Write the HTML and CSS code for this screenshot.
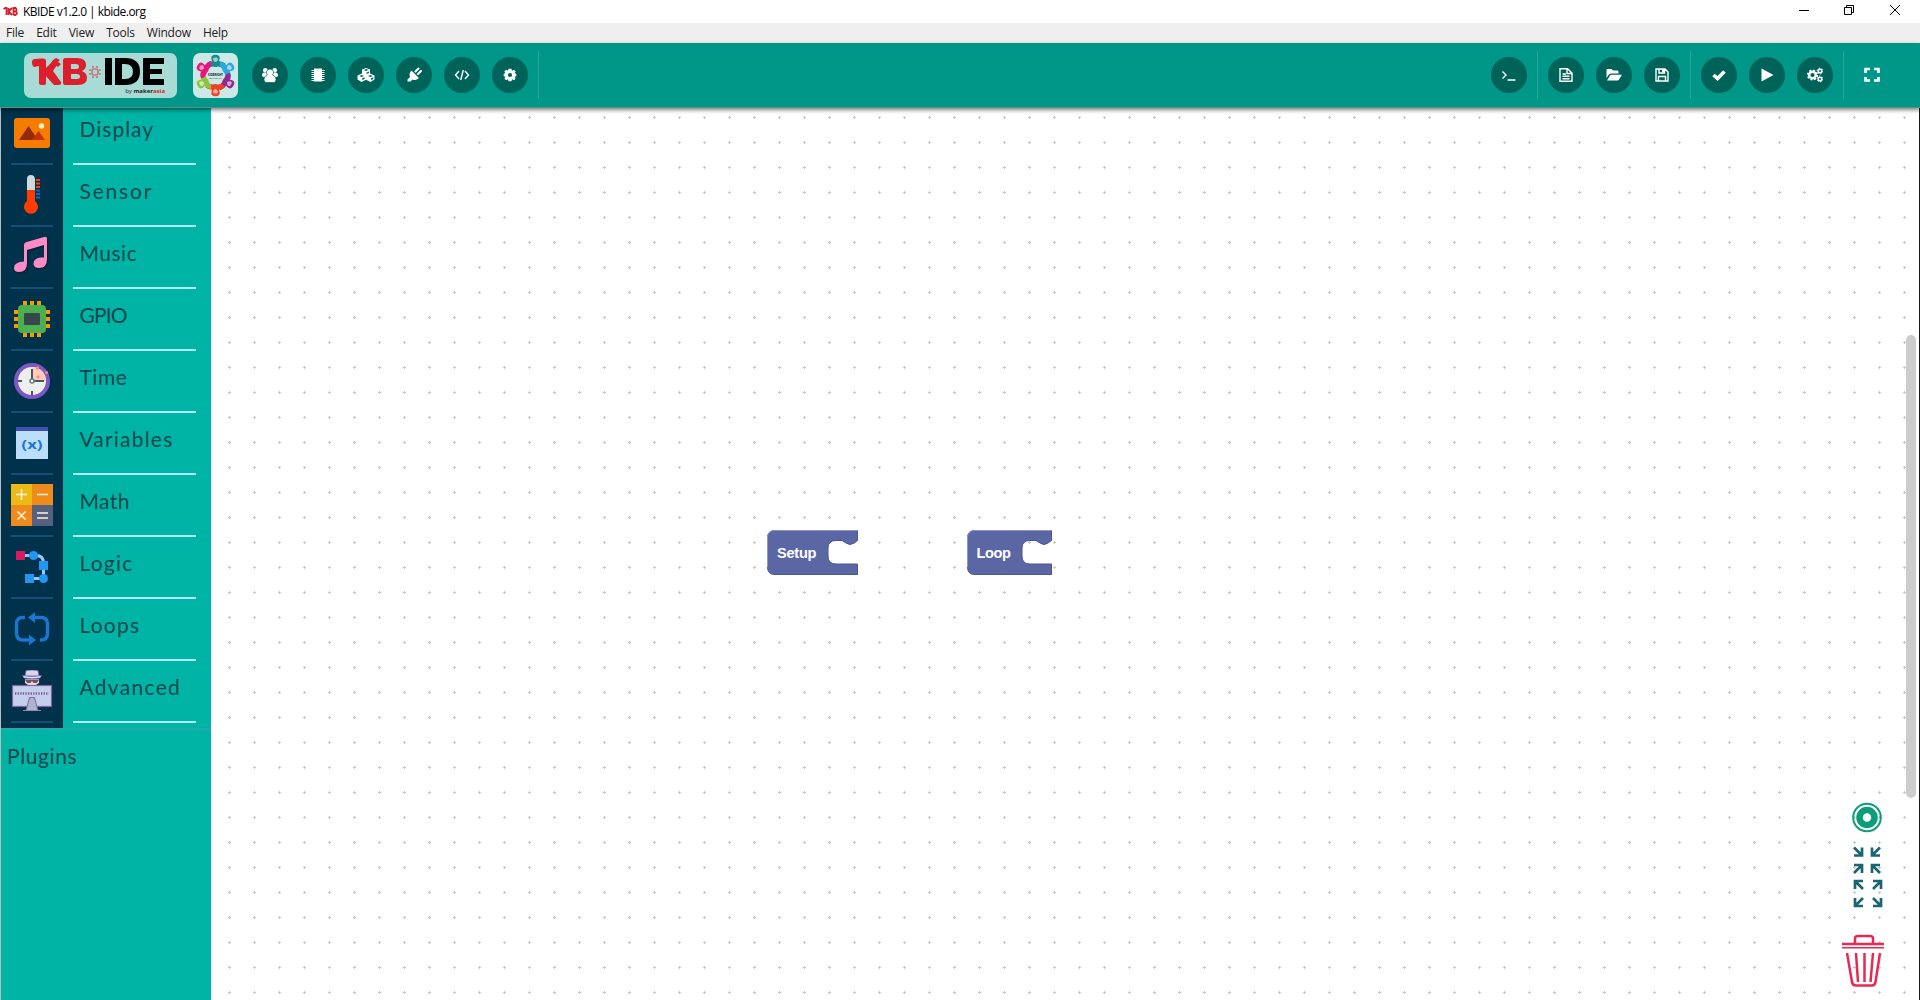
FILE: index.html
```
<!DOCTYPE html>
<html lang="en">
<head>
<meta charset="utf-8">
<title>KBIDE v1.2.0 | kbide.org</title>
<link rel="stylesheet" href="styles.css">
</head>
<body>
<div class="app">
  <header class="titlebar">
    <svg class="title-logo" viewBox="0 0 14 9"><path d="M0 2L2 1H3V8M5 1V8M8.500 1L5 4.500L8.500 8M10 8V1H12Q14 2.500 12 4.500Q15 6 12 8H10M10 4.500H12" fill="none" stroke="#d81e28" stroke-width="1.800"/></svg>
    <span class="title-text">KBIDE v1.2.0 | kbide.org</span>
    <div class="window-controls">
      <svg width="12" height="12" viewBox="0 0 12 12"><path d="M2 6.500H12" /></svg>
      <svg width="12" height="12" viewBox="0 0 12 12"><path d="M1.500 3.500H8.500V10.500H1.500ZM3.500 3.500V1.500H10.500V8.500H8.500" /></svg>
      <svg width="12" height="12" viewBox="0 0 12 12"><path d="M1 1L11 11M11 1L1 11" /></svg>
    </div>
  </header>
  <nav class="menubar"><span>File</span><span>Edit</span><span>View</span><span>Tools</span><span>Window</span><span>Help</span></nav>

  <div class="toolbar">
    <div class="logo">
      <div class="logo-main">
        <svg class="logo-spark" viewBox="0 0 153 45">
          <g fill="#dc1f2a"><path d="M8 9Q8 6 11 6L17 5.500H19Q22 5.500 22 8V30Q22 32 20 32H17Q15 32 15 30V13L10 14Q8 13 8 9Z"/><path d="M20 17L28 9L33 12L29 18L37 29Q38 32 34 32H30L20 21Z"/><path d="M29 7L32 5L36 7L34 9L37 11L34 14L31 12L28 13L27 10Z"/><path fill-rule="evenodd" d="M41 5H53Q62 5 62 12Q62 16 58 18Q63 20 63 25Q63 32 54 32H41Q39 32 39 29V8Q39 5 41 5ZM47 11V16H52Q55 16 55 13.500Q55 11 52 11ZM47 21V26H53Q56 26 56 23.500Q56 21 53 21Z"/></g>
          <g stroke="#dc4a50" fill="none" stroke-width="1.200"><rect x="68" y="16" width="6" height="6" rx="1.500"/><path d="M69 15V13M73 15V13M69 23V25M73 23V25M67 17H65M67 21H65M75 17H77M75 21H77"/></g>
          <path d="M81 5H88V32H81ZM91 5H101Q116 5 116 18.500Q116 32 101 32H91ZM98 11V26H101Q109 26 109 18.500Q109 11 101 11ZM119 5H140V11H126V16H138V21H126V26H140V32H119Z" fill="#000" fill-rule="evenodd"/>
        </svg>
        <span class="logo-by">by <b>maker<i>asia</i></b></span>
      </div>
    </div>
    <div class="community">
      <svg viewBox="0 0 45 45">
        <defs><g id="person"><path d="M18.300 5.500Q18 1.800 22.500 1.800T26.700 5.500L26 8.200Q29.500 8 33 11Q29 15 25 13.500Q22.500 14.500 20 13.500Q16 15 13 11.500Q15.500 8.200 19 8.200Z"/><path d="M20 6.500Q20 4 22.500 4.500Q25 4 25 6.500Q24 9 22.500 9T20 6.500Z" fill="#fff" fill-opacity=".6"/></g></defs>
        <use href="#person" fill="#168c8c"/><use href="#person" fill="#2aa7df" transform="rotate(60 22.500 22.500)"/><use href="#person" fill="#94278f" transform="rotate(120 22.500 22.500)"/><use href="#person" fill="#ef4123" transform="rotate(180 22.500 22.500)"/><use href="#person" fill="#8bc53f" transform="rotate(240 22.500 22.500)"/><use href="#person" fill="#e9127f" transform="rotate(300 22.500 22.500)"/>
        <text x="15" y="22.500" textLength="15" lengthAdjust="spacingAndGlyphs">KIDBRIGHT</text><text class="sub" x="16" y="25.500" textLength="13" lengthAdjust="spacingAndGlyphs">COMMUNITY</text>
      </svg>
    </div>
    <div class="tools tools-left">
      <span class="btn"><svg viewBox="0 0 16 16"><circle cx="3.300" cy="3.300" r="2.300"/><circle cx="12.700" cy="3.300" r="2.300"/><path d="M0 8Q0 5.500 2 5.500H14Q16 5.500 16 8Q16 10 14.500 10H1.500Q0 10 0 8Z"/><path class="person" d="M8 2A3.500 3.500 0 0 1 10.500 8Q14 9 14 12.500Q14 15.500 11.500 15.500H4.500Q2 15.500 2 12.500Q2 9 5.500 8A3.500 3.500 0 0 1 8 2Z"/></svg></span>
      <span class="btn"><svg viewBox="0 0 16 16"><path d="M4 1.500H12V14.500H4Z"/><path d="M1.500 3.500H14.500M1.500 5.500H14.500M1.500 7.500H14.500M1.500 9.500H14.500M1.500 11.500H14.500M1.500 13.500H14.500" class="line"/></svg></span>
      <span class="btn"><svg class="wide" viewBox="0 0 18 16"><path fill-rule="evenodd" d="M9 1L13 2.500V6.500L17.500 8.500V12.500L13.500 15L9 12.800L4.500 15L.500 12.500V8.500L5 6.500V2.500ZM7 3L9 4L11.500 3L9 2ZM9.500 5.500V7L12 6V4.500ZM2.500 9L4.500 10L7 9L4.500 8ZM5.200 11.200V13L7.500 12V10.200ZM11 9L13.500 10L15.500 9L13.500 8ZM14 11.200V13L16.300 12V10.200Z"/></svg></span>
      <span class="btn"><svg viewBox="0 0 16 16"><path d="M9.500 4.500L12.500 1.500M12 7L15 4" class="plug"/><path d="M5.500 3.500L13 11Q10 14 6.500 12.500L4.500 14.500H1.500V12.500L4 10Q2.500 6.500 5.500 3.500Z"/></svg></span>
      <span class="btn"><svg viewBox="0 0 16 16"><path class="line code" d="M5 4L1.500 8L5 12M11 4L14.500 8L11 12M9.300 3L6.700 13"/></svg></span>
      <span class="btn"><svg viewBox="0 0 16 16"><path fill-rule="evenodd" d="M6.500 1.700H9.500L10 3.700L12 2.800L13.600 4.500L12.500 6.300L14.300 6.700V9.300L12.500 9.800L13.600 11.600L12 13.300L10 12.300L9.500 14.300H6.500L6 12.300L4 13.300L2.400 11.600L3.500 9.800L1.700 9.300V6.700L3.500 6.300L2.400 4.500L4 2.800L6 3.700ZM8 5.900A2.100 2.100 0 1 0 8 10.100A2.100 2.100 0 1 0 8 5.900Z"/></svg></span>
      <i class="divider"></i>
    </div>
    <div class="tools tools-right">
      <span class="btn"><svg viewBox="0 0 16 16"><path class="line code" d="M1.500 4.500L5 8L1.500 11.500M6.500 13H14.500"/></svg></span>
      <i class="divider"></i>
      <span class="btn"><svg viewBox="0 0 16 16"><path class="line code" d="M2 1.700H9.500L14 6V14.300H2ZM9 1.700V6.500H14M4.500 7H8M4.500 9.300H11.500M4.500 11.800H11.500"/></svg></span>
      <span class="btn"><svg viewBox="0 0 16 16"><path d="M.500 11V3Q.500 2 1.500 2H5.500L7 3.500H11.500Q12.500 3.500 12.500 5V6.500H5Q3.500 6.500 2.500 8Z"/><path d="M1 13.500L4 8.500Q4.500 7.700 5.500 7.700H16L13 12.500Q12.500 13.500 11.500 13.500Z"/></svg></span>
      <span class="btn"><svg viewBox="0 0 16 16"><path class="line code" d="M2 2H11L14 5V14H2ZM4.500 14V9.500H11.500V14M5 2V6H10.500V2"/><path d="M8 2H10.500V5.500H8Z"/></svg></span>
      <i class="divider"></i>
      <span class="btn"><svg viewBox="0 0 16 16"><path d="M2.500 8L6.500 11.500L13.500 4.500" class="check"/></svg></span>
      <span class="btn"><svg viewBox="0 0 16 16"><path d="M2.500 1.500L14.500 8L2.500 14.500Z"/></svg></span>
      <span class="btn"><svg viewBox="0 0 16 16"><g class="gears"><circle cx="5.500" cy="8" r="3.300" stroke-width="2.400"/><circle cx="5.500" cy="8" r="4.800" stroke-width="1.600" stroke-dasharray="1.900 1.870"/><circle cx="13" cy="4" r="1.800" stroke-width="1.500"/><circle cx="13" cy="12" r="1.800" stroke-width="1.500"/><circle cx="13" cy="4" r="2.900" stroke-dasharray="1.300 1.737"/><circle cx="13" cy="12" r="2.900" stroke-dasharray="1.300 1.737"/></g></svg></span>
      <i class="divider"></i>
      <span class="btn plain"><svg viewBox="0 0 16 16"><path class="corner" d="M1.500 6V2H6M10 2H14.500V6M14.500 10V13.500H10M6 13.500H1.500V10"/></svg></span>
    </div>
  </div>

  <div class="body">
    <aside class="sidebar">
      <ul class="categories">
        <li><span class="ico"><svg viewBox="0 0 42 42"><rect x="3" y="6" width="36" height="30" rx="3" fill="#f57c00"/><circle cx="30.500" cy="14" r="2.700" fill="#fff3bd"/><path d="M8 28L17.500 14L27 28Z" fill="#942a09"/><path d="M21 28L27.500 19L34 28Z" fill="#bf360c"/></svg></span><span class="name display">Display</span></li>
        <li><span class="ico"><svg viewBox="0 0 42 42"><path d="M16 30V5Q16 1 19.800 1T24 5V30" fill="#cfd8dc"/><path d="M16 16H24V27A7 7 0 1 1 16 27Z" fill="#ff3d00"/><path d="M25 6H29M25 9.500H29M25 13H29" stroke="#ff3d00" stroke-width="2"/><path d="M25 16.500H29M25 20H29M25 23.500H29" stroke="#1565c0" stroke-width="2"/></svg></span><span class="name sensor">Sensor</span></li>
        <li><span class="ico music-icon"><svg viewBox="0 0 42 42"><path d="M13 9Q13 7 15 6.300L33 1Q36 0 36 2.500V23Q36 32 28 32Q23 32 22.500 28Q22.500 22 30 21.500H33V9L16 14V27Q16 36 8 36Q3 36 3 32Q3 26 13 25.500Z" fill="#ff8bc6"/></svg></span><span class="name music">Music</span></li>
        <li><span class="ico"><svg viewBox="0 0 42 42"><path d="M14 3V39M21 3V39M28 3V39M3 14H39M3 21H39M3 28H39" stroke="#ff9800" stroke-width="4"/><rect x="7" y="7" width="28" height="28" rx="4" fill="#4caf50"/><rect x="13" y="15" width="16" height="12" rx="1" fill="#37474f"/></svg></span><span class="name gpio">GPIO</span></li>
        <li><span class="ico"><svg viewBox="0 0 42 42"><circle cx="21" cy="21" r="16" fill="#eee" stroke="#7e57c2" stroke-width="4"/><path d="M21 21V7Q34 8 35 21Z" fill="#ffccbc"/><path d="M21 9V21H33M7 21H11M21 31V35" fill="none" stroke="#455a64" stroke-width="2"/><circle cx="21" cy="21" r="2" fill="#fff" stroke="#607d8b" stroke-width="1.500"/><g fill="#ff8a70"><circle cx="26.500" cy="8" r="1.700"/><circle cx="27" cy="17" r="1.500"/><circle cx="35.500" cy="12.500" r="1.500"/></g></svg></span><span class="name time">Time</span></li>
        <li><span class="ico"><svg viewBox="0 0 42 42"><path fill="#bbdefb" d="M5 5H37V37H5Z"/><path fill="#3f51b5" d="M5 5H37V9H5Z"/><text class="var" x="21" y="27" textLength="21" lengthAdjust="spacingAndGlyphs">(x)</text></svg></span><span class="name variables">Variables</span></li>
        <li><span class="ico"><svg viewBox="0 0 42 42"><path d="M0 0H21V21H0Z" fill="#ecba16"/><path d="M21 0H42V21H21ZM0 21H21V42H0Z" fill="#ef8b1a"/><path d="M21 21H42V42H21Z" fill="#56607f"/><path d="M5 10.500H16M10.500 5V16M26 10.500H37M6.500 27.500L14.500 35.500M14.500 27.500L6.500 35.500M26 29H37M26 34H37" stroke="#fff4df" stroke-width="1.500"/></svg></span><span class="name math">Math</span></li>
        <li><span class="ico"><svg viewBox="0 0 42 42"><path d="M10 9.500H25Q32.500 9.500 32.500 17V32.500H19" stroke="#90caf9" stroke-width="3" fill="none"/><path fill="#d81b60" d="M5 5H14V14H5Z"/><path fill="#2196f3" d="M28 15H37V24H28ZM14 28H23V37H14Z"/><circle cx="22.500" cy="9.500" r="4.500" fill="#2196f3"/><circle cx="32.500" cy="32.500" r="4.500" fill="#2196f3"/></svg></span><span class="name logic">Logic</span></li>
        <li><span class="ico"><svg viewBox="0 0 42 42"><path d="M14 9.500H11.500Q5.500 9.500 5.500 16V25Q5.500 32 12 32H19M29 32H30Q36.500 32 36.500 25V16Q36.500 9.500 30 9.500H23" fill="none" stroke="#1976d2" stroke-width="3.400"/><path d="M17 9.500L24 4V15ZM25 32L18 26.500V37.500Z" fill="#1976d2"/></svg></span><span class="name loops">Loops</span></li>
        <li><span class="ico"><svg viewBox="0 0 42 42"><path d="M14 6L15 .8Q21-1 27 .8L28 6Z" fill="#d4d7ee" stroke="#8b659f" stroke-width=".8"/><path d="M11.500 5.500Q21 7.500 30.500 5.500L29 8Q21 9.500 13 8Z" fill="#dadef0" stroke="#8b659f" stroke-width=".6"/><path d="M14 9H28V13Q21 19 14 13Z" fill="#f9d9cf"/><path d="M14 9.500H28L26 13H22.500L21 11L19.500 13H16Z" fill="#5f5775"/><rect x="1.500" y="15.500" width="39" height="21" fill="#c3cfec" stroke="#895f99" stroke-width="1.200"/><path d="M4 23.500H38" stroke="#785a96" stroke-width="2.400" stroke-dasharray="1.300 1.300"/><path d="M15 40.500L18.500 27.500H23.500L27 40.500Z" fill="#a9b5d1" stroke="#895f99"/><path d="M12 40.500H30" stroke="#9d82b0"/></svg></span><span class="name advanced">Advanced</span></li>
      </ul>
      <div class="plugins">Plugins</div>
    </aside>
    <main class="workspace">
      <svg class="block setup" width="92" height="46" viewBox="0 0 92 46"><path class="shape" d="M.500 8Q.500 .500 8 .500H90.500V10.500L87 13Q83 16 79 13L75 10.500H69Q61 10.500 61 18V26Q61 34 69 34H90.500V44.500H8Q.500 44.500 .500 37Z"/><path class="edge" d="M.500 37V8Q.500 .500 8 .500H90.500"/><text x="10" y="28" textLength="39.500">Setup</text></svg>
      <svg class="block loop" width="92" height="46" viewBox="0 0 92 46"><path class="shape" d="M.500 8Q.500 .500 8 .500H84.500V10.500L81 13Q77 16 73 13L69 10.500H63Q55 10.500 55 18V26Q55 34 63 34H84.500V44.500H8Q.500 44.500 .500 37Z"/><path class="edge" d="M.500 37V8Q.500 .500 8 .500H84.500"/><text x="9.500" y="28" textLength="34.500">Loop</text></svg>
      <svg class="zoom" width="36" height="108" viewBox="0 0 36 108">
        <g fill="none" stroke="#0b9e78"><circle cx="18" cy="15.500" r="13.800" stroke-width="2"/><circle cx="18" cy="15.500" r="7.500" stroke-width="6.500"/></g>
        <path d="M5 45.500L12.500 53M13 45.500V53.500H5M31 45.500L23.500 53M23 45.500V53.500H31M5 71L12.500 63.500M13 71V63H5M31 71L23.500 63.500M23 71V63H31M14 87L6.500 79.500M6 87V79H14M24 87L31.500 79.500M32 87V79H24M14 96L6.500 103.500M6 96V104H14M24 96L31.500 103.500M32 96V104H24" fill="none" stroke="#1b6573" stroke-width="2.700"/>
      </svg>
      <svg class="trash" width="42" height="54" viewBox="0 0 42 54"><g fill="none" stroke="#e62a52" stroke-width="2.500"><path d="M0 13.800H42" stroke-width="1.400"/><path d="M0 10H42"/><path d="M13 9V4.500Q13 2 16 2H28Q31 2 31 4.500V9"/><path d="M5 19L10 48Q10.500 51.500 14 51.500H30Q33 51.500 33.500 48L38 19M14 19L16 48M22.500 19V48M31 19L28.500 48"/></g></svg>
      <i class="scrollbar"></i>
    </main>
  </div>
</div>
</body>
</html>
```

FILE: styles.css
```
* { box-sizing: border-box; }
body { margin: 0; overflow: hidden; background: #fff; font-family: "Open Sans", sans-serif; }
.app { display: flex; flex-direction: column; height: 1000px; }
.titlebar { flex: 0 0 23px; display: flex; align-items: center; padding-left: 3px; font-size: 12px; color: #000; }
.title-logo { width: 15px; height: 9px; }
.title-text { margin-left: 5px; letter-spacing: -.53px; }
.window-controls { margin-left: auto; display: flex; gap: 34px; padding-right: 19px; margin-top: -3px; }
.window-controls svg { fill: none; stroke: #000; stroke-width: 1; }
.menubar { flex: 0 0 20px; background: #efefef; display: flex; align-items: center; gap: 12.200px; padding: 0 0 2px 6px; font-size: 12px; letter-spacing: -.25px; color: #222; }
.menubar span { white-space: nowrap; }

.toolbar { position: relative; z-index: 2; flex: 0 0 65px; display: flex; align-items: center; padding-left: 24px; background: #009688; border-bottom: 1px solid #5d8f89; box-shadow: 0 2px 4px rgba(0,0,0,.5); }
.logo { width: 153px; height: 45px; border-radius: 7px; background: #a9dbd6; }
.logo-main { position: relative; height: 45px; }
.logo-spark { display: block; width: 153px; height: 45px; }
.logo-by { position: absolute; right: 12px; bottom: 2px; font: 6px/9px "Open Sans", sans-serif; color: #222; }
.logo-by i { color: #dc1f2a; font-style: normal; }
.community { width: 45px; height: 45px; margin-left: 16px; border-radius: 7px; background: #cce9e7; }
.community svg { display: block; }
.community text { font: 900 3.200px Lato, sans-serif; fill: #111; }
.community .sub { font-size: 2.500px; font-weight: 400; }
.tools { display: flex; align-items: center; }
.tools-left { margin-left: 14px; gap: 12px; }
.tools-right { margin-left: auto; gap: 12px; padding-right: 30px; }
.btn { display: flex; align-items: center; justify-content: center; width: 36px; height: 36px; border-radius: 50%; background: #00635a; }
.btn svg { width: 16px; height: 16px; fill: #fff; }
.btn svg.wide { width: 18px; }
.btn .line { fill: none; stroke: #fff; stroke-width: 1; }
.btn .code { stroke-width: 1.400; }
.btn .person { stroke: #00635a; stroke-width: .7; }
.btn .plug { stroke: #fff; stroke-width: 2; stroke-linecap: round; }
.btn .check { fill: none; stroke: #fff; stroke-width: 3.600; }
.btn .gears { fill: none; stroke: #fff; }
.btn .corner { fill: none; stroke: #fff; stroke-width: 2.600; }
.btn.plain { background: none; }
.divider { width: 1px; height: 48px; margin: 0 -2px; background: #26a69a; }
.tools-left .divider { margin: 0 0 0 -2px; }

.body { flex: 1; display: flex; min-height: 0; border-left: 1px solid #bdbdbd; border-right: 1px solid #181818; }
.sidebar { flex: 0 0 210px; background: #00b4a5; font-family: Lato, sans-serif; color: #12474f; }
.categories { list-style: none; margin: 0; padding: 0; height: 620px; background: linear-gradient(90deg, #01324b 62px, transparent 62px); }
.categories li { display: flex; height: 62px; }
.categories li:first-child { height: 57px; }
.ico { width: 42px; margin: 0 20px 0 10px; border-bottom: 2px solid #164e76; display: flex; align-items: flex-end; padding-bottom: 9px; }
.ico svg { display: block; width: 42px; height: 42px; }
.music-icon svg { filter: drop-shadow(1px 1px 1px rgba(0,0,0,.4)); }
.name { width: 123px; border-bottom: 2px solid #b5ecf3; padding: 0 0 19px 6.500px; display: flex; align-items: flex-end; font-size: 21px; line-height: 30px; }
.var { font: 700 13px "Open Sans", sans-serif; fill: #1976d2; text-anchor: middle; }
.display { letter-spacing: 1px; }
.sensor { letter-spacing: 1.800px; }
.music { letter-spacing: .5px; }
.gpio { letter-spacing: -.9px; }
.time { letter-spacing: .5px; }
.variables { letter-spacing: 1.200px; }
.math { letter-spacing: .4px; }
.logic { letter-spacing: 1.200px; }
.loops { letter-spacing: 1.200px; }
.advanced { letter-spacing: 1.300px; }
.plugins { border-top: 2px solid #21aaae; padding: 11px 6px; font-size: 21px; line-height: 30px; letter-spacing: .6px; }

.workspace { position: relative; flex: 1; background: #fff url("data:image/svg+xml,%3Csvg xmlns='http://www.w3.org/2000/svg' width='25' height='25'%3E%3Cpath d='M0 1.500H3M1.500 0V3' stroke='%23c8c8c8'/%3E%3C/svg%3E") 17px 8px / 25px 25px; }
.block, .zoom, .trash, .scrollbar { position: absolute; }
.setup { left: 556px; top: 422px; }
.loop { left: 756px; top: 422px; }
.block .shape { fill: #5b67a5; stroke: #4b5590; stroke-width: 1; }
.block .edge { fill: none; stroke: #8f98c7; }
.block text { font: bold 14.600px "Liberation Sans", Arial, sans-serif; fill: #fff; }
.zoom { left: 1638px; top: 694px; }
.trash { left: 1631px; top: 826px; }
.scrollbar { left: 1695px; top: 227px; width: 10px; height: 463px; border-radius: 5px; background: #ccc; }
```
